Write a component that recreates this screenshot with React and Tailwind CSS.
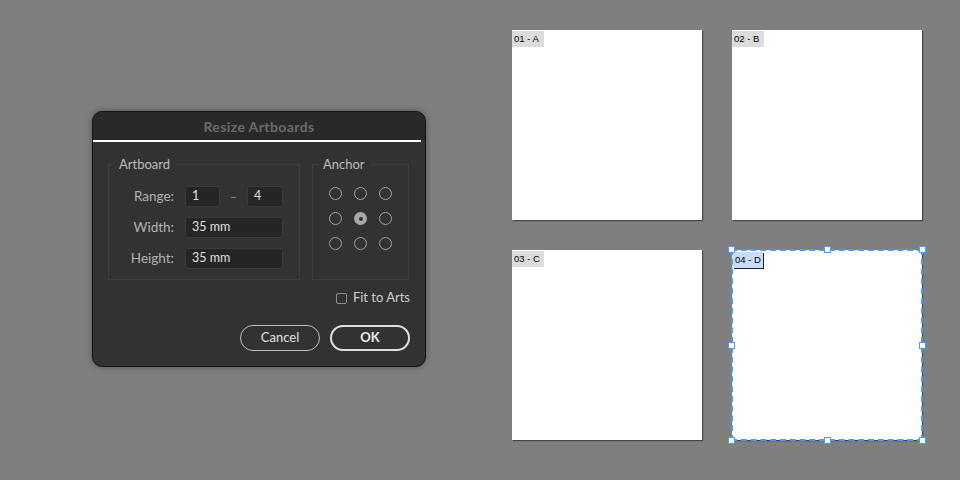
import React from "react";

const font = { fontFamily: "Lato, 'Open Sans', sans-serif" };

function Field({ value, className = "" }) {
  return (
    <div
      className={`h-[21px] rounded-[3px] bg-[#252525] border border-[#3b3b3b] flex items-center pl-[6px] text-[12.5px] text-[#e0e0e0] ${className}`}
    >
      {value}
    </div>
  );
}

function Row({ label, children }) {
  return (
    <div className="flex items-center h-[21px] gap-[11px]">
      <span className="w-[65px] text-right text-[13.5px] text-[#b4b4b4]">{label}</span>
      {children}
    </div>
  );
}

function Radio({ on }) {
  return on ? (
    <div className="w-[13px] h-[13px] rounded-full bg-[#a8a8a8] flex items-center justify-center">
      <div className="w-[4px] h-[4px] rounded-full bg-[#333]" />
    </div>
  ) : (
    <div className="w-[13px] h-[13px] rounded-full border-[1.5px] border-[#a4a4a4]" />
  );
}

function Dialog() {
  return (
    <div
      className="w-[334px] h-[256px] rounded-[10px] border border-[#141414] bg-[#323232] overflow-hidden flex flex-col shadow-[0_0_6px_rgba(0,0,0,0.35)]"
      style={font}
    >
      <div className="h-[28px] bg-[#2a2829] flex items-center justify-center text-[14px] tracking-[0.4px] font-bold text-[#6c6b6c]">
        Resize Artboards
      </div>
      <div className="h-[2px] bg-white mr-[4px]" />
      <div className="flex-1 flex flex-col px-[15px] pt-[14px]">
        <div className="flex gap-[12px]">
          <fieldset className="w-[192px] h-[124px] border border-[#3e3e3e] px-0">
            <legend className="ml-[5px] px-[5px] text-[13px] text-[#bdbdbd] leading-[16px]">Artboard</legend>
            <div className="flex flex-col gap-[10px] pt-[14px]">
              <Row label="Range:">
                <div className="flex items-center">
                  <Field value="1" className="w-[35px]" />
                  <span className="w-[27px] text-center text-[12px] text-[#999]">–</span>
                  <Field value="4" className="w-[36px]" />
                </div>
              </Row>
              <Row label="Width:">
                <Field value="35 mm" className="w-[98px]" />
              </Row>
              <Row label="Height:">
                <Field value="35 mm" className="w-[98px]" />
              </Row>
            </div>
          </fieldset>
          <fieldset className="w-[97px] h-[124px] border border-[#3e3e3e] px-0">
            <legend className="ml-[5px] px-[5px] text-[13px] text-[#bdbdbd] leading-[16px]">Anchor</legend>
            <div className="grid grid-cols-3 gap-[12px] w-max pl-[16px] pt-[15px]">
              {[0, 1, 2, 3, 4, 5, 6, 7, 8].map((i) => (
                <Radio key={i} on={i === 4} />
              ))}
            </div>
          </fieldset>
        </div>
        <div className="flex justify-end items-center gap-[6px] mt-[10px] h-[16px]">
          <div className="w-[11px] h-[11px] rounded-[2px] border border-[#8c8c8c]" />
          <span className="text-[13px] text-[#d0d0d0]">Fit to Arts</span>
        </div>
        <div className="flex justify-end gap-[10px] mt-[19px]">
          <button className="w-[80px] h-[26px] rounded-full border-[1.5px] border-[#bdbdbd] text-[13px] text-[#e2e2e2]">
            Cancel
          </button>
          <button className="w-[80px] h-[26px] rounded-full border-2 border-[#e0e0e0] text-[13px] font-bold text-[#ececec]">
            OK
          </button>
        </div>
      </div>
    </div>
  );
}

function Artboard({ label, selected }) {
  return (
    <div className="relative w-[190px] h-[190px] bg-white shadow-[1px_1px_1px_rgba(0,0,0,0.45)]">
      <div
        className={`absolute h-[16px] flex items-center px-[2px] text-[9.5px] text-black ${
          selected ? "left-[1px] top-[2px] bg-[#c6ddf8] shadow-[1px_1px_0_#222]" : "left-0 top-px bg-[#dcdcdc] w-[32px]"
        }`}
        style={{ fontFamily: "'Liberation Sans', Arial, sans-serif" }}
      >
        {label}
      </div>
      {selected && (
        <>
          <div className="absolute -inset-[1px] border-2 border-dashed border-[#4b9bf3]" />
          {[
            "-left-[4px] -top-[4px]",
            "left-[92px] -top-[4px]",
            "-right-[4px] -top-[4px]",
            "-left-[4px] top-[92px]",
            "-right-[4px] top-[92px]",
            "-left-[4px] -bottom-[4px]",
            "left-[92px] -bottom-[4px]",
            "-right-[4px] -bottom-[4px]",
          ].map((p) => (
            <div key={p} className={`absolute w-[7px] h-[7px] bg-white border border-[#4b9bf3] ${p}`} />
          ))}
        </>
      )}
    </div>
  );
}

export default function App() {
  return (
    <div className="w-[960px] h-[480px] bg-[#7f7f7f] flex overflow-hidden">
      <div className="pl-[92px] pt-[111px]">
        <Dialog />
      </div>
      <div className="ml-[86px] pt-[30px] grid grid-cols-2 gap-[30px] h-max">
        <Artboard label="01 - A" />
        <Artboard label="02 - B" />
        <Artboard label="03 - C" />
        <Artboard label="04 - D" selected />
      </div>
    </div>
  );
}
